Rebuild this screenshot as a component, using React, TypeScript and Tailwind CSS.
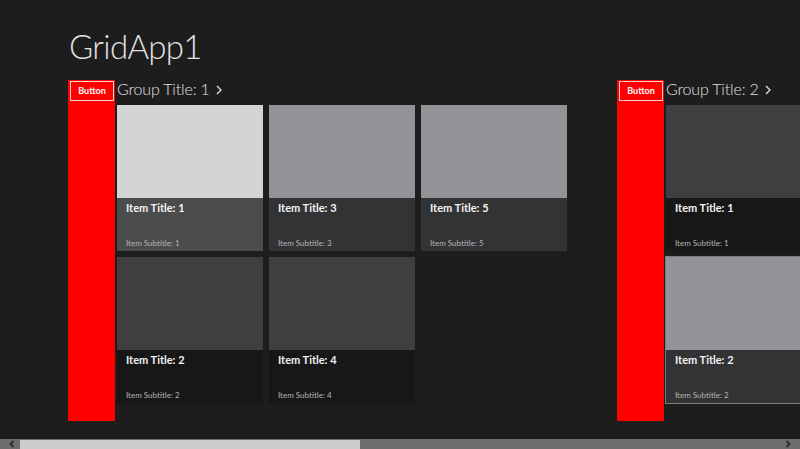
import React from "react";

type Tile = {
  title: string;
  subtitle: string;
  image: string;
  body: string;
  selected?: boolean;
};

const group1: Tile[] = [
  { title: "Item Title: 1", subtitle: "Item Subtitle: 1", image: "bg-[#d3d4d6]", body: "bg-[#4a4b4b]" },
  { title: "Item Title: 2", subtitle: "Item Subtitle: 2", image: "bg-[#3f3f41]", body: "bg-[#171717]" },
  { title: "Item Title: 3", subtitle: "Item Subtitle: 3", image: "bg-[#929396]", body: "bg-[#323335]" },
  { title: "Item Title: 4", subtitle: "Item Subtitle: 4", image: "bg-[#3f3f41]", body: "bg-[#171717]" },
  { title: "Item Title: 5", subtitle: "Item Subtitle: 5", image: "bg-[#929396]", body: "bg-[#323335]" },
];

const group2: Tile[] = [
  { title: "Item Title: 1", subtitle: "Item Subtitle: 1", image: "bg-[#3f3f41]", body: "bg-[#171717]" },
  { title: "Item Title: 2", subtitle: "Item Subtitle: 2", image: "bg-[#939497]", body: "bg-[#323335]", selected: true },
  { title: "Item Title: 3", subtitle: "Item Subtitle: 3", image: "bg-[#929396]", body: "bg-[#323335]" },
];

function ItemTile({ tile }: { tile: Tile }) {
  return (
    <div
      className={
        "flex h-[146px] w-[146px] flex-col " +
        (tile.selected ? "outline outline-1 outline-[#7c7c7c]" : "")
      }
    >
      <div className={"h-[93px] " + tile.image} />
      <div className={"flex h-[53px] flex-col px-[9px] " + tile.body}>
        <div className="mt-[2px] text-[11px] font-bold leading-[16px] text-[#f2f2f2]">{tile.title}</div>
        <div className="mt-auto mb-[3px] text-[8px] leading-[10px] text-[#b4b4b4]">{tile.subtitle}</div>
      </div>
    </div>
  );
}

function Group({ index, tiles }: { index: number; tiles: Tile[] }) {
  return (
    <div className="flex shrink-0 gap-[2px]">
      <div className="h-[341px] w-[47px] shrink-0 bg-[#ff0000] pt-[1px] pl-[2px]">
        <button className="flex h-[20px] w-[44px] items-center justify-center border border-[#f4d0d0] text-[9px] font-bold text-white">
          Button
        </button>
      </div>
      <div className="flex flex-col">
        <div className="flex h-[25px] items-start gap-[6px] whitespace-nowrap text-[16px] font-light leading-[18px] tracking-[-0.01em] text-[#e2e2e2]">
          <span>Group Title: {index}</span>
          <svg width="6" height="10" viewBox="0 0 6 10" className="mt-[5px]">
            <path d="M1 1 L5 5 L1 9" stroke="#e2e2e2" strokeWidth="1.3" fill="none" />
          </svg>
        </div>
        <div className="grid grid-flow-col grid-rows-2 gap-[6px]">
          {tiles.map((t, i) => (
            <ItemTile key={i} tile={t} />
          ))}
        </div>
      </div>
    </div>
  );
}

function Chevron({ left }: { left?: boolean }) {
  return (
    <svg width="8" height="8" viewBox="0 0 8 8" className="shrink-0">
      <path
        d={left ? "M5.5 1 L2.5 4 L5.5 7" : "M2.5 1 L5.5 4 L2.5 7"}
        stroke="#2b2b2b"
        strokeWidth="1.8"
        fill="none"
      />
    </svg>
  );
}

export default function App() {
  return (
    <div
      className="flex h-[449px] w-[800px] flex-col overflow-hidden bg-[#1d1d1d]"
      style={{ fontFamily: 'Lato, "Open Sans", sans-serif' }}
    >
      <div className="flex-1 overflow-hidden">
        <h1 className="pt-[29px] pl-[69px] text-[33px] font-light leading-[34px] tracking-[-0.02em] text-[#e2e2e2]">GridApp1</h1>
        <div className="mt-[17px] flex gap-[50px] pl-[68px]">
          <Group index={1} tiles={group1} />
          <Group index={2} tiles={group2} />
        </div>
      </div>
      <div className="flex h-[10px] items-center bg-[#6d6d6d] px-[8px]">
        <Chevron left />
        <div className="ml-[4px] h-[9px] w-[340px] bg-[#cdcdcd]" />
        <div className="flex-1" />
        <Chevron />
      </div>
    </div>
  );
}
